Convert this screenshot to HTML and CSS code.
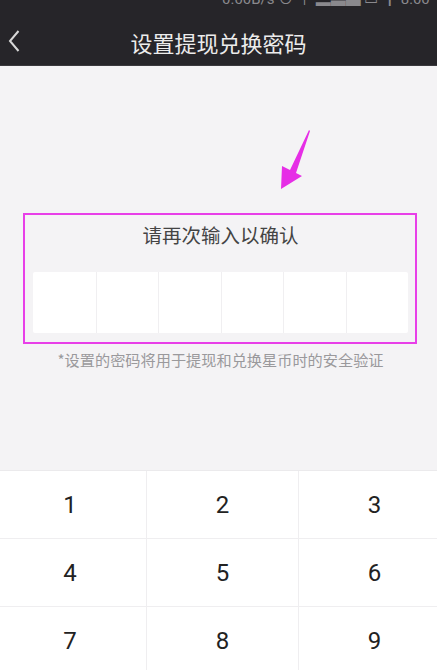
FILE: index.html
```html
<!DOCTYPE html>
<html lang="zh">
<head>
<meta charset="utf-8">
<title>设置提现兑换密码</title>
<link rel="stylesheet" href="styles.css">
</head>
<body>
<div class="screen">
  <header class="topbar">
    <div class="status"><span class="status-text">0.00B/s ⊙ ↑ ▂▃▅ ▭ ┃ 8:00</span></div>
    <div class="navbar">
      <svg class="back" width="14" height="24" viewBox="0 0 14 24"><path d="M11.5 2 L3 12 L11.5 22" fill="none" stroke="#d8d8d8" stroke-width="2"/></svg>
      <h1 class="title">设置提现兑换密码</h1>
    </div>
  </header>

  <main class="content">
    <svg class="pointer" width="40" height="70" viewBox="0 0 40 70">
      <polygon points="38,1 39,2 25,44 31,47 10,60 11,37 19,41" fill="#e62ee6"/>
    </svg>
    <section class="pin-card">
      <p class="pin-label">请再次输入以确认</p>
      <div class="pin-cells">
        <span class="cell"></span><span class="cell"></span><span class="cell"></span>
        <span class="cell"></span><span class="cell"></span><span class="cell"></span>
      </div>
    </section>
    <p class="hint">*设置的密码将用于提现和兑换星币时的安全验证</p>
  </main>

  <div class="keypad">
    <button class="key">1</button><button class="key">2</button><button class="key">3</button>
    <button class="key">4</button><button class="key">5</button><button class="key">6</button>
    <button class="key">7</button><button class="key">8</button><button class="key">9</button>
  </div>
</div>
</body>
</html>
```

FILE: styles.css
```css
* { box-sizing: border-box; }
html, body { margin: 0; padding: 0; }
body {
  font-family: "Noto Sans CJK SC", "Noto Sans", sans-serif;
  background: #f4f3f5;
}
.screen {
  width: 437px;
  height: 670px;
  overflow: hidden;
  display: flex;
  flex-direction: column;
}
.topbar {
  flex-shrink: 0;
  background: #262529;
  height: 66px;
  border-bottom: 1px solid #3a393d;
}
.status {
  height: 8px;
  overflow: hidden;
}
.status-text {
  display: block;
  margin-top: -9px;
  padding-left: 222px;
  font-size: 15px;
  line-height: 16px;
  color: #8a898d;
  white-space: nowrap;
  font-family: "Roboto", "Noto Sans CJK SC", sans-serif;
}
.navbar {
  height: 57px;
  display: flex;
  align-items: center;
  justify-content: center;
  position: relative;
}
.back {
  position: absolute;
  left: 7px;
  top: 21px;
}
.title {
  margin: 0;
  font-size: 22px;
  line-height: 30px;
  font-weight: 400;
  color: #ececec;
  margin-top: 10px;
}
.content {
  flex-shrink: 0;
  height: 404px;
  position: relative;
  padding-top: 147px;
}
.pointer {
  position: absolute;
  left: 271px;
  top: 63px;
}
.pin-card {
  margin: 0 20px 0 23px;
  border: 2px solid #e83fe8;
  padding: 6px 7px 9px 8px;
  height: 131px;
}
.pin-label {
  margin: 0;
  text-align: center;
  font-size: 19.5px;
  line-height: 28px;
  color: #444;
}
.pin-cells {
  margin-top: 23px;
  display: grid;
  grid-template-columns: repeat(6, 1fr);
  height: 61px;
  background: #fff;
  border-radius: 2px;
}
.cell { border-left: 1px solid #f0eff1; }
.cell:first-child { border-left: none; }
.hint {
  margin: 5px 0 0;
  text-align: center;
  font-size: 15.2px;
  line-height: 20px;
  color: #9a999c;
  padding-left: 4px;
}
/* keypad is wider than the viewport and centred on it */
.keypad {
  flex-shrink: 0;
  width: 456px;
  margin-left: -6px;
  display: grid;
  grid-template-columns: repeat(3, 152px);
  grid-auto-rows: 68px;
  background: #fff;
  border-top: 1px solid #ebeaec;
}
.key {
  border: none;
  background: #fff;
  border-left: 1px solid #efeef0;
  border-bottom: 1px solid #efeef0;
  font-family: "Roboto", sans-serif;
  font-size: 24px;
  color: #222;
  padding: 0;
}
.key:nth-child(3n+1) { border-left: none; }
```
